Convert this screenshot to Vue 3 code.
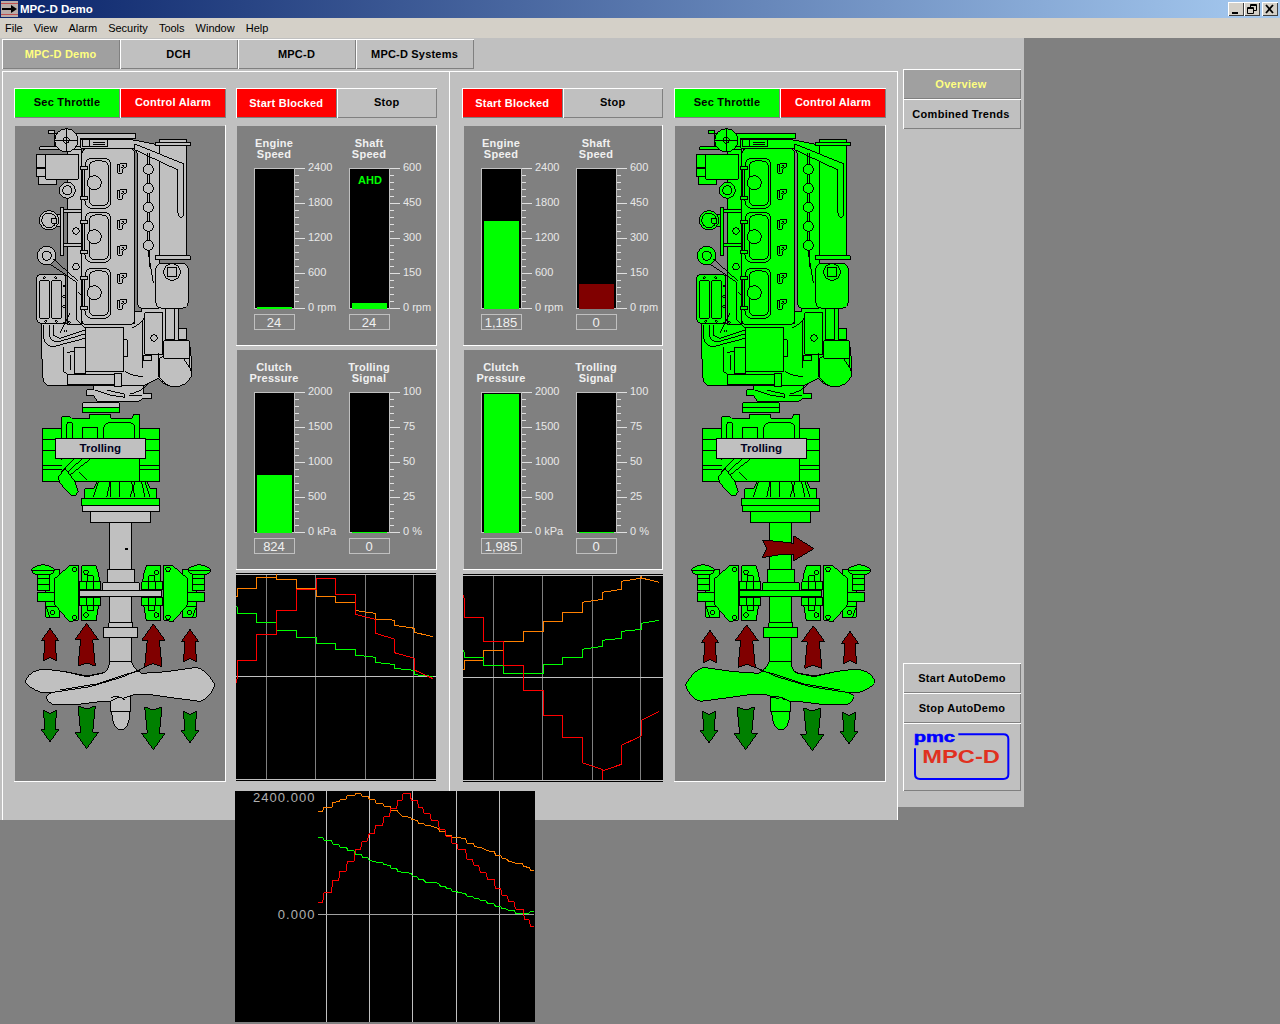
<script setup>
const rr = (x, y, w, h, r) =>
  `M${x + r} ${y}H${x + w - r}Q${x + w} ${y} ${x + w} ${y + r}V${y + h - r}Q${x + w} ${y + h} ${x + w - r} ${y + h}H${x + r}Q${x} ${y + h} ${x} ${y + h - r}V${y + r}Q${x} ${y} ${x + r} ${y}Z`
const circ = (cx, cy, r) => `M${cx - r} ${cy}a${r} ${r} 0 1 0 ${2 * r} 0a${r} ${r} 0 1 0 ${-2 * r} 0Z`
const dia = (x, y, r = 4) => `M${x - r} ${y}L${x} ${y - r}L${x + r} ${y}L${x} ${y + r}Z`
const rect = (x1, y1, x2, y2) => `M${x1} ${y1}H${x2}V${y2}H${x1}Z`

const cylinders = [115, 277, 445].flatMap((y) => [
  rr(225, y, 77, 150, 22),
  rr(238, y + 8, 57, 134, 18),
  circ(253, y + 73, 21)
])
const clips = [139, 229, 301, 391, 469, 559].map((y) => rect(212, y, 232, y + 10))
const valves = [130, 208, 298, 376, 460, 538].flatMap((y) => [
  `M322 ${y + 4}L336 ${y}L350 ${y + 2}V${y + 10}L338 ${y + 17}L336 ${y + 30}H324Z`,
  `M328 ${y + 6}V${y + 26}M336 ${y + 6}L342 ${y + 8}L334 ${y + 14}`
])
const manifoldCircles = [148, 205, 262, 319, 376].map((y) => circ(415, y, 15))

const engineShapes = [
  'M230 810H252V798H400V822H425V836H398L385 845H262L252 828H230Z',
  'M95 612V690L98 770Q100 798 125 798H400L445 775Q465 800 495 800Q530 800 546 765V735L538 662H530V627H505V560H395V575H375V612Z',
  rect(172, 90, 215, 615),
  'M115 32H135V40H378V55H212V85H135V42H115Z',
  rect(90, 80, 215, 90),
  'M212 60H370L448 75V565H395Q382 562 382 545V100L372 85H212Z',
  rr(215, 85, 160, 530, 20),
  ...cylinders,
  ...clips,
  ...valves,
  rect(217, 60, 240, 80),
  rect(240, 58, 292, 80),
  circ(169, 61, 35),
  circ(169, 61, 9),
  'M85 170H140V195H85Z',
  rect(80, 103, 108, 143),
  rect(80, 145, 108, 170),
  rect(107, 103, 205, 178),
  circ(172, 211, 24),
  circ(172, 211, 14),
  rect(152, 262, 160, 407),
  rect(160, 268, 215, 277),
  rect(160, 370, 215, 380),
  circ(198, 333, 10),
  circ(198, 440, 10),
  rect(140, 285, 152, 320),
  circ(117, 301, 29),
  circ(117, 301, 22),
  rect(125, 295, 140, 310),
  circ(110, 407, 28),
  circ(110, 407, 14),
  rr(80, 463, 88, 147, 12),
  rr(88, 482, 30, 113, 3),
  rr(124, 482, 31, 113, 3),
  dia(103, 473),
  dia(137, 473),
  dia(107, 604),
  dia(139, 604),
  dia(162, 498),
  dia(162, 530),
  dia(162, 560),
  dia(178, 607),
  dia(167, 633),
  ...manifoldCircles,
  'M448 75H530V410H448Z',
  rect(448, 58, 530, 67),
  rect(437, 67, 541, 77),
  rect(436, 408, 541, 419),
  'M375 72L522 132V280Q522 292 513 292Q504 292 504 280V150L372 88Z',
  rr(437, 430, 98, 135, 22),
  circ(486, 456, 25),
  rect(472, 442, 500, 470),
  rect(405, 578, 458, 703),
  circ(432, 654, 10),
  rect(193, 683, 227, 762),
  rect(227, 622, 340, 755),
  rect(172, 765, 335, 795),
  rect(313, 760, 335, 800),
  rect(400, 708, 425, 722),
  'M448 715L538 662V735L546 765Q530 800 495 800Q465 800 448 770Z',
  rect(462, 662, 538, 715),
  rect(505, 627, 530, 660),
  rect(467, 565, 495, 660)
]
const engineLines = [
  'M135 61H205M169 27V95',
  'M250 68H285M250 74H285',
  'M217 149V229M217 311V391M217 479V559',
  'M412 100V135M420 100V135M412 163V190M420 163V190M412 220V247M420 220V247M412 277V304M420 277V304M412 334V361M420 334V361M414 392L430 488M420 392V440',
  'M120 432L200 487V600L225 625M128 415L203 482',
  'M100 615V650Q105 680 130 680L225 655M120 615V650Q125 665 145 665L225 642M130 615V645L150 655L225 630',
  'M160 680V755L172 762M170 700Q190 690 193 695M183 705V750',
  'M345 755Q370 770 400 770M340 660H352V710H340M365 625Q395 610 405 590M398 600V745',
  'M445 700V770M520 715L540 745',
  'M255 810Q300 830 345 832L342 822L290 810M360 822Q395 815 415 790M358 826H395',
  'M205 515L215 528M150 640L180 580'
]

const hoses = [
  'M250 292L265 247M290 292L300 247M303 292V247M330 292V247M360 292L375 247M375 292L365 247M405 292L395 247M420 292L405 247'
]
const gearLines = [
  'M97 120H155M97 153H155M97 198H155M97 210H155',
  'M390 120H448M390 153H448M390 198H448M390 210H448',
  'M155 85V180M390 85V245',
  'M155 215L190 178M168 220L215 178M180 225L240 178M205 215L230 240M295 177H365'
]
const gearFinger = 'M145 232L165 205L195 245L205 275L195 288L183 285L150 250Z'
const clampShapes = [
  rect(108, 510, 150, 652),
  'M108 620L120 652H150V620Z',
  rect(82, 525, 120, 537),
  rect(82, 537, 118, 553),
  rect(82, 553, 118, 572),
  rect(82, 578, 135, 605),
  'M135 535L180 496H205V660L178 665L135 615Z',
  'M85 497Q99 490 113 497Q133 503 133 511Q133 520 113 525H85Q65 520 65 511Q65 503 85 497Z',
  circ(193, 508, 7),
  circ(128, 638, 7),
  circ(193, 652, 7),
  'M215 498H258L265 520L270 548V590L265 620L258 662H215Z',
  rect(208, 546, 272, 570),
  rect(208, 592, 272, 618),
  rect(232, 528, 250, 546),
  rect(232, 618, 250, 632),
  circ(228, 517, 7),
  circ(228, 645, 7)
]
const clampLines = ['M65 511H133M231 546V570M250 546V570M231 592V618M250 592V618']

const upArrow = (cx, tip, h, big) => {
  const w = big ? 35 : 26
  const n = big ? 18 : 15
  const b = big ? 26 : 20
  const head = h * 0.38
  return `M${cx} ${tip}L${cx + w} ${tip + head}H${cx + n}L${cx + b} ${tip + h}L${cx} ${tip + h - 9}L${cx - b} ${tip + h}L${cx - n} ${tip + head}H${cx - w}Z`
}
const downArrow = (cx, tip, h, big) => {
  const w = big ? 35 : 26
  const n = big ? 18 : 15
  const b = big ? 26 : 20
  const head = h * 0.38
  return `M${cx} ${tip}L${cx + w} ${tip - head}H${cx + n}L${cx + b} ${tip - h}L${cx} ${tip - h + 9}L${cx - b} ${tip - h}L${cx - n} ${tip - head}H${cx - w}Z`
}

const bladePath =
  'M48 840Q60 808 110 808L165 815L230 828L282 818Q298 808 298 785H365Q368 805 395 820L470 815L560 802Q590 810 615 855Q600 895 570 904L500 895L430 885L370 885L340 895L325 892L300 905H270L190 915L130 915Q110 905 108 890Q115 880 130 877L95 878Q60 865 48 850Z'
const bladeLines = 'M130 877L240 860L340 830L405 802M150 870L260 852L350 822L390 812M165 815L230 830L285 818'

const gauge = (x, t, labels, val, top, color, ahd) => ({ x, t, labels, val, top, color, ahd })
const rpm = ['2400', '1800', '1200', '600', '0 rpm']
const shaft = ['600', '450', '300', '150', '0 rpm']
const kpa = ['2000', '1500', '1000', '500', '0 kPa']
const pct = ['100', '75', '50', '25', '0 %']
const stackFor = (a, b, c, d) => [
  { vb: '236 125 201 221', y: 168, titleY: 147, gauges: [a, b] },
  { vb: '236 349 201 221', y: 392, titleY: 371, gauges: [c, d] }
]
const majors = [0, 35, 70, 105, 140]
const minors = [7, 14, 21, 28, 42, 49, 56, 63, 77, 84, 91, 98, 112, 119, 126, 133]

const halves = [
  {
    id: 'left',
    body: '#c0c0c0',
    shaft: '#c0c0c0',
    labelX: 136,
    mirror: false,
    flow: false,
    ups: [upArrow(120, 685, 97), upArrow(230, 670, 128, true), upArrow(430, 672, 128, true), upArrow(540, 688, 97)],
    downs: [downArrow(120, 1025, 94), downArrow(230, 1046, 128, true), downArrow(430, 1049, 128, true), downArrow(540, 1028, 94)],
    stacks: stackFor(
      gauge(254, ['Engine', 'Speed'], rpm, '24', 307, '#00ff00'),
      gauge(349, ['Shaft', 'Speed'], shaft, '24', 303, '#00ff00', 'AHD'),
      gauge(254, ['Clutch', 'Pressure'], kpa, '824', 475, '#00ff00'),
      gauge(349, ['Trolling', 'Signal'], pct, '0', 532, '#00ff00')
    ),
    trendBox: '12 9 600 624',
    grid: { v: [103, 250, 400, 545], h: 319, top: 12, bottom: 628, x1: 12, x2: 612 },
    traces: [
      ['#ff8000', '12,78 16,78 16,55 73,55 73,22 133,22 133,12 133,28 193,28 193,55 252,55 252,78 310,78 310,97 370,97 370,121 385,124 430,130 430,148 475,148 487,152 487,166 530,172 547,175 547,187 603,200'],
      ['#00ff00', '12,108 16,112 16,130 73,130 73,157 133,157 133,181 193,181 193,202 252,202 252,220 310,220 310,238 370,238 370,255 415,260 430,262 430,277 475,282 487,284 487,295 547,301 547,314 603,319'],
      ['#ff0000', '12,338 16,325 16,271 73,271 73,193 133,193 133,121 193,121 193,58 252,58 252,25 310,25 310,73 370,73 370,133 430,148 430,190 487,207 487,248 547,265 547,300 603,326']
    ]
  },
  {
    id: 'right',
    body: '#00ff00',
    shaft: '#00ff00',
    labelX: 139,
    mirror: true,
    flow: true,
    ups: [upArrow(120, 691, 97), upArrow(230, 674, 128, true), upArrow(430, 677, 128, true), upArrow(540, 694, 97)],
    downs: [downArrow(117, 1028, 94), downArrow(227, 1049, 128, true), downArrow(427, 1052, 128, true), downArrow(537, 1031, 94)],
    stacks: stackFor(
      gauge(254, ['Engine', 'Speed'], rpm, '1,185', 221, '#00ff00'),
      gauge(349, ['Shaft', 'Speed'], shaft, '0', 284, '#800000'),
      gauge(254, ['Clutch', 'Pressure'], kpa, '1,985', 394, '#00ff00'),
      gauge(349, ['Trolling', 'Signal'], pct, '0', 532, '#00ff00')
    ),
    trendBox: '15 12 600 624',
    grid: { v: [106, 253, 403, 547], h: 322, top: 16, bottom: 631, x1: 15, x2: 615 },
    traces: [
      ['#ff8000', '16,297 19,297 19,271 76,271 76,241 136,241 136,214 196,214 196,184 256,184 256,154 313,154 313,127 373,127 373,97 433,88 433,67 490,58 490,34 547,25 550,18 550,24 604,37'],
      ['#00ff00', '16,241 19,247 19,262 76,262 76,286 136,286 136,310 256,310 256,283 313,283 313,262 373,262 373,238 433,229 433,211 490,205 490,184 550,178 550,160 604,151'],
      ['#ff0000', '16,76 19,88 19,142 76,142 76,214 136,214 136,286 196,286 196,361 256,361 256,436 313,436 313,502 373,502 373,578 433,598 433,631 433,603 490,583 490,526 550,498 550,451 604,424']
    ]
  }
]

const menu = ['File', 'View', 'Alarm', 'Security', 'Tools', 'Window', 'Help']
const tabs = ['MPC-D Demo', 'DCH', 'MPC-D', 'MPC-D Systems']

const floatV = [283, 412, 541, 673, 802]
const floatTraces = [
  ['#ff8000', '258,724 272,724 275,712 300,712 303,697 322,695 325,688 342,688 345,677 368,677 372,670 386,670 390,678 408,678 412,688 428,688 432,700 452,700 456,709 474,709 478,722 495,722 510,738 535,742 540,748 556,752 560,760 575,760 580,766 598,768 620,776 622,784 640,786 642,795 658,795 660,802 700,805 705,820 725,822 727,830 745,832 765,842 788,846 790,855 806,857 810,865 826,868 830,875 848,877 850,880 870,880 875,890 892,892 895,900 906,902'],
  ['#00ff00', '258,802 272,802 276,811 298,811 302,822 320,824 324,831 344,833 348,842 366,842 370,852 388,854 392,862 408,864 412,872 430,874 434,877 452,877 456,884 474,886 478,896 494,896 498,905 515,907 538,910 542,918 555,920 560,928 575,930 580,936 598,936 620,940 625,948 640,950 645,955 658,957 660,964 675,965 680,968 700,970 705,978 722,980 727,985 742,987 745,991 763,993 766,1000 785,1001 790,1008 806,1010 810,1015 826,1018 830,1022 848,1022 850,1030 890,1030 895,1024 906,1024'],
  ['#ff0000', '258,998 272,998 276,968 298,968 302,932 320,932 324,904 342,904 346,874 366,874 370,840 386,838 390,815 406,813 412,790 428,790 430,767 452,767 456,740 472,740 476,716 494,716 497,692 510,690 513,672 534,670 538,690 556,692 560,712 572,712 576,730 594,732 598,750 618,752 622,778 640,780 642,798 658,800 660,820 675,822 678,838 700,838 705,868 722,870 725,885 740,887 745,908 762,908 767,928 786,928 790,955 806,955 810,975 826,978 830,994 846,996 850,1017 874,1018 877,1047 892,1050 895,1069 906,1070']
]
</script>

<template>
  <div class="screen">
    <header class="titlebar">
      <div class="title-left">
        <svg class="app-icon" width="18" height="18" viewBox="0 0 18 18">
          <rect x="1" y="1" width="17" height="16" fill="#b8aca8" />
          <path d="M1 3.5H18M1 14.5H18" stroke="#c05050" />
          <path d="M2 8H11V5L17 9L11 13V10H2Z" fill="#000" />
        </svg>
        <span>MPC-D Demo</span>
      </div>
      <div class="win-buttons">
        <button class="win-btn">
          <svg width="15" height="14" viewBox="0 0 15 14"><path d="M4 10H10V12H4Z" fill="#000" /></svg>
        </button>
        <button class="win-btn">
          <svg width="15" height="14" viewBox="0 0 15 14"><path d="M6.5 2.5H12.5V8.5H10M6.5 2.5V5M6 3.5H12.5" fill="none" stroke="#000" /><path d="M3.5 5.5H9.5V11.5H3.5ZM3.5 6.5H9.5" fill="none" stroke="#000" /></svg>
        </button>
        <button class="win-btn close">
          <svg width="15" height="14" viewBox="0 0 15 14"><path d="M4 3L11 11M11 3L4 11" stroke="#000" stroke-width="1.8" /></svg>
        </button>
      </div>
    </header>

    <nav class="menubar">
      <span v-for="m in menu" :key="m">{{ m }}</span>
    </nav>

    <div class="workspace">
      <div class="content">
        <div class="tabs">
          <div v-for="(t, i) in tabs" :key="t" class="bevel tab" :class="{ active: i === 0 }">{{ t }}</div>
        </div>

        <main class="main">
          <section v-for="h in halves" :key="h.id" class="half" :class="'half-' + h.id">
            <div class="engine-col">
              <div class="btn-row">
                <div class="bevel btn green">Sec Throttle</div>
                <div class="bevel btn red">Control Alarm</div>
              </div>
              <div class="engine-panel">
                <svg class="engine-svg" width="212" height="657" viewBox="0 0 212 657">
                  <g stroke="#000" stroke-width="3" shape-rendering="crispEdges" transform="translate(-4,-5) scale(0.33333)">
                    <path v-for="(d, i) in engineShapes" :key="i" :d="d" :fill="h.body" />
                    <path v-for="(d, i) in engineLines" :key="'l' + i" :d="d" fill="none" />
                  </g>
                  <g stroke="#000" stroke-width="3" shape-rendering="crispEdges" transform="translate(-4,275) scale(0.33333)">
                    <path :d="rect(218, 8, 328, 22)" :fill="h.shaft" />
                    <path :d="rect(218, 22, 328, 38)" fill="#00ff00" />
                    <path d="M155 85V50H180L185 55H240V43H303V55H365L370 45H390V85H448V245H390V245H105H97V85Z" fill="#00ff00" />
                    <path :d="rr(170, 67, 18, 60, 8)" fill="#00ff00" />
                    <path :d="rect(217, 82, 263, 115)" fill="#00ff00" />
                    <path d="M281 115V85Q283 68 300 68H360Q375 70 375 90V115" fill="#00ff00" />
                    <path v-for="(d, i) in gearLines" :key="'g' + i" :d="d" fill="none" />
                    <path :d="gearFinger" fill="#00ff00" />
                    <path d="M225 295V267H250L262 245H410L420 265H440V295Z" fill="#00ff00" />
                    <path v-for="(d, i) in hoses" :key="'h' + i" :d="d" fill="none" />
                    <path :d="rect(215, 295, 448, 317)" fill="#00ff00" />
                    <path :d="rect(218, 317, 448, 335)" :fill="h.shaft" />
                    <path :d="rect(241, 335, 422, 367)" :fill="h.shaft" />

                    <path d="M303 895V935H363V890H303Z" :fill="h.shaft" />
                    <path d="M305 935Q308 990 333 990Q358 990 360 935Z" :fill="h.shaft" />
                    <path :d="rect(298, 367, 365, 800)" :fill="h.shaft" />
                    <path v-if="!h.flow" d="M346 445H353V449H346Z" fill="#000" />
                    <path :d="rect(292, 510, 375, 548)" :fill="h.shaft" />
                    <g>
                      <path v-for="(d, i) in clampShapes" :key="'c' + i" :d="d" fill="#00ff00" />
                      <path v-for="(d, i) in clampLines" :key="'cl' + i" :d="d" fill="none" />
                    </g>
                    <g transform="translate(667,0) scale(-1,1)">
                      <path v-for="(d, i) in clampShapes" :key="'c' + i" :d="d" fill="#00ff00" />
                      <path v-for="(d, i) in clampLines" :key="'cl' + i" :d="d" fill="none" />
                    </g>
                    <path :d="rect(278, 548, 388, 571)" :fill="h.shaft" />
                    <path :d="rect(208, 571, 455, 590)" :fill="h.shaft" />
                    <path :d="rect(296, 668, 368, 682)" :fill="h.shaft" />
                    <path :d="rect(280, 682, 383, 712)" :fill="h.shaft" />
                    <g :transform="h.mirror ? 'translate(661,0) scale(-1,1)' : ''">
                      <path :d="bladePath" :fill="h.body" />
                      <path :d="bladeLines" fill="none" />
                    </g>
                    <path d="M303 892Q325 885 345 900" fill="none" />
                    <path v-for="(d, i) in h.ups" :key="'u' + i" :d="d" fill="#800000" />
                    <path v-for="(d, i) in h.downs" :key="'d' + i" :d="d" fill="#008000" />
                    <path v-if="h.flow" d="M277 420L330 425L372 430V408L432 446L372 482V462L325 465L277 473L290 446Z" fill="#800000" />
                    <rect :x="h.labelX" y="115" width="271" height="60" fill="#c0c0c0" />
                  </g>
                  <text class="trolling" :x="(h.labelX + 135) / 3 - 4" y="327" text-anchor="middle">Trolling</text>
                </svg>
              </div>
            </div>

            <div class="gauge-col">
              <div class="btn-row">
                <div class="bevel btn red low">Start Blocked</div>
                <div class="bevel btn">Stop</div>
              </div>
              <div v-for="s in h.stacks" :key="s.y" class="gauge-panel">
                <svg width="201" height="221" :viewBox="s.vb">
                  <g v-for="g in s.gauges" :key="g.x">
                    <text v-for="(line, i) in g.t" :key="line" class="g-title" :x="g.x + 20" :y="s.titleY + i * 11" text-anchor="middle">{{ line }}</text>
                    <rect :x="g.x + 0.5" :y="s.y + 0.5" width="40" height="140" fill="#000" stroke="#c0c0c0" shape-rendering="crispEdges" />
                    <rect :x="g.x + 3" :y="g.top" width="35" :height="s.y + 141 - g.top" :fill="g.color" shape-rendering="crispEdges" />
                    <text v-if="g.ahd" class="g-ahd" :x="g.x + 21" :y="s.y + 16" text-anchor="middle">{{ g.ahd }}</text>
                    <g stroke="#e0e0e0" shape-rendering="crispEdges">
                      <path v-for="m in majors" :key="m" :d="`M${g.x + 41} ${s.y + m + 0.5}H${g.x + 51}`" />
                      <path v-for="m in minors" :key="m" :d="`M${g.x + 41} ${s.y + m + 0.5}H${g.x + 45}`" />
                    </g>
                    <text v-for="(l, i) in g.labels" :key="l" class="g-label" :x="g.x + 54" :y="s.y + majors[i] + 3">{{ l }}</text>
                    <rect :x="g.x + 0.5" :y="s.y + 146.5" width="40" height="15" fill="none" stroke="#c0c0c0" shape-rendering="crispEdges" />
                    <text class="g-value" :x="g.x + 20" :y="s.y + 159" text-anchor="middle">{{ g.val }}</text>
                  </g>
                </svg>
              </div>
              <div class="trend">
                <svg width="200" height="208" :viewBox="h.trendBox" shape-rendering="crispEdges">
                  <path v-for="x in h.grid.v" :key="x" :d="`M${x} ${h.grid.top}V${h.grid.bottom}`" stroke="#808080" stroke-width="3" />
                  <path :d="`M${h.grid.x1} ${h.grid.top}H${h.grid.x2}M${h.grid.x1} ${h.grid.h}H${h.grid.x2}M${h.grid.x1} ${h.grid.bottom}H${h.grid.x2}`" stroke="#c0c0c0" stroke-width="3" />
                  <polyline v-for="t in h.traces" :key="t[0]" :points="t[1]" :stroke="t[0]" fill="none" stroke-width="3" />
                </svg>
              </div>
            </div>
          </section>
        </main>
      </div>

      <aside class="sidebar">
        <div class="side-group top">
          <div class="bevel side-btn active">Overview</div>
          <div class="bevel side-btn">Combined Trends</div>
        </div>
        <div class="side-group">
          <div class="bevel side-btn">Start AutoDemo</div>
          <div class="bevel side-btn">Stop AutoDemo</div>
          <div class="bevel logo">
            <svg width="118" height="68" viewBox="24 204 354 204">
              <path d="M190 238H325Q340 238 340 252V358Q340 372 325 372H75Q60 372 60 358V280" fill="none" stroke="#0000ff" stroke-width="6" />
              <text class="logo-pmc" x="56" y="260" textLength="124" lengthAdjust="spacingAndGlyphs">pmc</text>
              <text class="logo-mpc" x="82" y="325" textLength="233" lengthAdjust="spacingAndGlyphs">MPC-D</text>
            </svg>
          </div>
        </div>
      </aside>
    </div>

    <div class="float-trend">
      <svg width="300" height="231" viewBox="9 663 900 693" shape-rendering="crispEdges">
        <path v-for="x in floatV" :key="x" :d="`M${x} 663V1356`" stroke="#c0c0c0" stroke-width="3" />
        <path d="M258 1033H906" stroke="#a0a0a0" stroke-width="3" />
        <polyline v-for="t in floatTraces" :key="t[0]" :points="t[1]" :stroke="t[0]" fill="none" stroke-width="3" />
        <text class="float-label" x="251" y="697" text-anchor="end">2400.000</text>
        <text class="float-label" x="251" y="1047" text-anchor="end">0.000</text>
      </svg>
    </div>
  </div>
</template>

<style>
html, body {
  margin: 0;
  background: #808080;
}
</style>

<style scoped>
.screen {
  position: relative;
  width: 1280px;
  height: 1024px;
  overflow: hidden;
  background: #808080;
  font-family: "Liberation Sans", Arial, sans-serif;
}
svg {
  display: block;
}
.titlebar {
  height: 18px;
  display: flex;
  align-items: center;
  justify-content: space-between;
  background: linear-gradient(90deg, #0a246a, #a6caf0);
  color: #fff;
  font-size: 11.5px;
  font-weight: 700;
}
.title-left {
  display: flex;
  align-items: center;
  gap: 2px;
}
.win-buttons {
  display: flex;
  padding-right: 2px;
}
.win-btn {
  width: 16px;
  height: 14px;
  padding: 0;
  border: 0;
  background: #d4d0c8;
  box-shadow: inset 1px 1px 0 #fff, inset -1px -1px 0 #404040;
}
.win-btn.close {
  margin-left: 2px;
}
.menubar {
  height: 20px;
  display: flex;
  align-items: center;
  gap: 11px;
  padding-left: 5px;
  background: #d4d0c8;
  color: #000;
  font-size: 11px;
}
.workspace {
  width: 1024px;
  display: flex;
  align-items: flex-start;
}
.bevel {
  box-shadow: inset 1px 1px 0 #fff, inset -1px -1px 0 #808080;
}
.content {
  width: 898px;
  height: 782px;
  background: #c0c0c0;
  box-sizing: border-box;
  padding: 1px 0 0 2px;
}
.tabs {
  display: flex;
  height: 30px;
}
.tab {
  width: 118px;
  box-sizing: border-box;
  padding-right: 1px;
  display: flex;
  align-items: center;
  justify-content: center;
  font-size: 11px;
  font-weight: 700;
  letter-spacing: 0.2px;
  color: #000;
}
.tab.active,
.side-btn.active {
  background: #a0a0a0;
  color: #ffff80;
}
.main {
  margin-top: 2px;
  height: 749px;
  box-sizing: border-box;
  display: flex;
  border-top: 1px solid #fff;
  border-left: 1px solid #fff;
  border-right: 1px solid #fff;
}
.half {
  display: flex;
  padding-top: 16px;
  align-items: flex-start;
}
.half-left {
  width: 446px;
  box-sizing: border-box;
  padding-left: 11px;
  gap: 10px;
}
.half-right {
  flex: 1;
  flex-direction: row-reverse;
  justify-content: flex-end;
  border-left: 1px solid #fff;
  height: 748px;
  box-sizing: border-box;
  padding-left: 12px;
  gap: 11px;
}
.engine-col {
  width: 212px;
}
.gauge-col {
  width: 201px;
}
.btn-row {
  display: flex;
  height: 30px;
}
.btn {
  flex: 1;
  box-sizing: border-box;
  padding-bottom: 2px;
  display: flex;
  align-items: center;
  justify-content: center;
  font-size: 11px;
  font-weight: 700;
  letter-spacing: 0.25px;
  color: #000;
  background: #c0c0c0;
}
.btn.green {
  background: #00ff00;
}
.btn.red {
  background: #ff0000;
  color: #fff;
}
.btn.low {
  padding-bottom: 0;
}
.engine-panel {
  margin-top: 7px;
  height: 657px;
  background: #808080;
  box-shadow: inset -1px -1px 0 #fff, inset 1px 1px 0 #c0c0c0;
}
.gauge-panel {
  margin-top: 3px;
  height: 221px;
  background: #808080;
  box-shadow: inset -1px -1px 0 #fff, inset 1px 1px 0 #c0c0c0;
}
.btn-row + .gauge-panel {
  margin-top: 7px;
}
.half-right .gauge-panel {
  margin-left: 1px;
}
.trend {
  margin-top: 3px;
  width: 200px;
  height: 208px;
  background: #000;
}
.half-right .gauge-col .trend {
  margin-top: 4px;
  margin-left: 1px;
}
.trolling {
  font-size: 11.5px;
  font-weight: 700;
  fill: #000020;
}
.g-title {
  font-size: 11px;
  font-weight: 700;
  letter-spacing: 0.25px;
  fill: #f0f0f0;
}
.g-label {
  font-size: 11px;
  fill: #e8e8e8;
}
.g-value {
  font-size: 13px;
  fill: #f0f0f0;
}
.g-ahd {
  font-size: 11px;
  font-weight: 700;
  fill: #00ff00;
}
.sidebar {
  width: 126px;
  height: 769px;
  box-sizing: border-box;
  padding: 31px 0 16px 5px;
  background: #c0c0c0;
  display: flex;
  flex-direction: column;
  justify-content: space-between;
}
.side-group {
  width: 118px;
}
.side-btn {
  height: 30px;
  box-sizing: border-box;
  display: flex;
  align-items: center;
  justify-content: center;
  font-size: 11px;
  font-weight: 700;
  letter-spacing: 0.3px;
  color: #000;
}
.side-group.top .side-btn {
  padding-right: 2px;
}
.logo {
  height: 68px;
}
.logo-pmc {
  font-size: 44px;
  font-weight: 700;
  fill: #0000ff;
  stroke: #0000ff;
  stroke-width: 1.5px;
}
.logo-mpc {
  font-size: 56px;
  font-weight: 700;
  fill: #e03020;
}
.float-trend {
  position: absolute;
  left: 235px;
  top: 791px;
  width: 300px;
  height: 231px;
  background: #000;
}
.float-label {
  font-size: 39px;
  letter-spacing: 3.2px;
  fill: #b0b0b0;
}
</style>
